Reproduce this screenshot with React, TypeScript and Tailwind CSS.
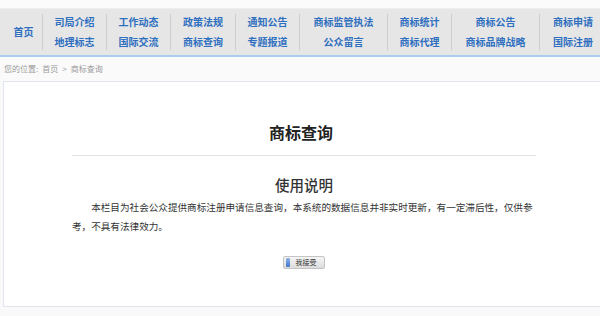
import React from "react";

const cols: { w: number; top: string; bottom?: string }[] = [
  { w: 43, top: "首页" },
  { w: 64, top: "司局介绍", bottom: "地理标志" },
  { w: 64, top: "工作动态", bottom: "国际交流" },
  { w: 65, top: "政策法规", bottom: "商标查询" },
  { w: 64, top: "通知公告", bottom: "专题报道" },
  { w: 88, top: "商标监管执法", bottom: "公众留言" },
  { w: 64, top: "商标统计", bottom: "商标代理" },
  { w: 88, top: "商标公告", bottom: "商标品牌战略" },
  { w: 66, top: "商标申请", bottom: "国际注册" },
];

export default function App() {
  return (
    <div
      className="w-[600px] h-[316px] overflow-hidden bg-[#f9f9f9] text-[#333]"
      style={{ fontFamily: '"Noto Sans CJK SC", "Noto Sans", sans-serif' }}
    >
      <div className="h-[8px] bg-[#fbfbfc]" />
      <div className="h-[47px] bg-[#e6e6e6] border-t border-[#ededed] flex items-stretch">
        {cols.map((c, i) => (
          <div key={i} className="flex shrink-0 items-center" style={{ width: c.w }}>
            <div
              className={
                "flex-1 flex flex-col items-center justify-center text-[10px] leading-[20px] font-bold text-[#2f6fc0] whitespace-nowrap" +
                (i === 0 ? " pl-[5px]" : "")
              }
            >
              <span>{c.top}</span>
              {c.bottom && <span>{c.bottom}</span>}
            </div>
            {i < cols.length - 1 && <div className="w-px h-[36px] bg-[#cfcfcf]" />}
          </div>
        ))}
      </div>
      <div className="h-[2px] bg-[#a8cdee]" />
      <div className="h-[24px] flex items-center pl-[4px] text-[8px] text-[#9a9a9a] bg-[#fafafa] gap-[4px]">
        <span>您的位置:</span>
        <span>首页</span>
        <span>&gt;</span>
        <span>商标查询</span>
      </div>
      <div className="ml-[3px] h-[226px] bg-white border-l border-t border-b border-[#e1e5ee]">
        <div className="ml-[68px] w-[464px] pt-[38px] flex flex-col">
          <div className="text-center text-[16px] leading-[24px] font-bold text-[#222] pr-[6px]">商标查询</div>
          <div className="mt-[11px] h-px bg-[#e3e3e3]" />
          <div className="mt-[19px] text-center text-[14.5px] leading-[20px] font-medium text-[#333]">使用说明</div>
          <p className="mt-[3px] text-[9.6px] leading-[19px] indent-[2em] text-[#333]">
            本栏目为社会公众提供商标注册申请信息查询，本系统的数据信息并非实时更新，有一定滞后性，仅供参考，不具有法律效力。
          </p>
          <div className="mt-[20px] flex justify-center">
            <button className="h-[13px] w-[42px] flex items-center rounded-[2px] border border-[#c4c4c4] bg-gradient-to-b from-[#f6f6f6] to-[#dcdcdc] px-[2px]">
              <span className="w-[4px] h-[9px] rounded-[1px] bg-gradient-to-b from-[#8fb4ea] to-[#3f74cc]" />
              <span className="flex-1 text-center text-[7px] leading-[9px] text-[#333]">我接受</span>
            </button>
          </div>
        </div>
      </div>
    </div>
  );
}
